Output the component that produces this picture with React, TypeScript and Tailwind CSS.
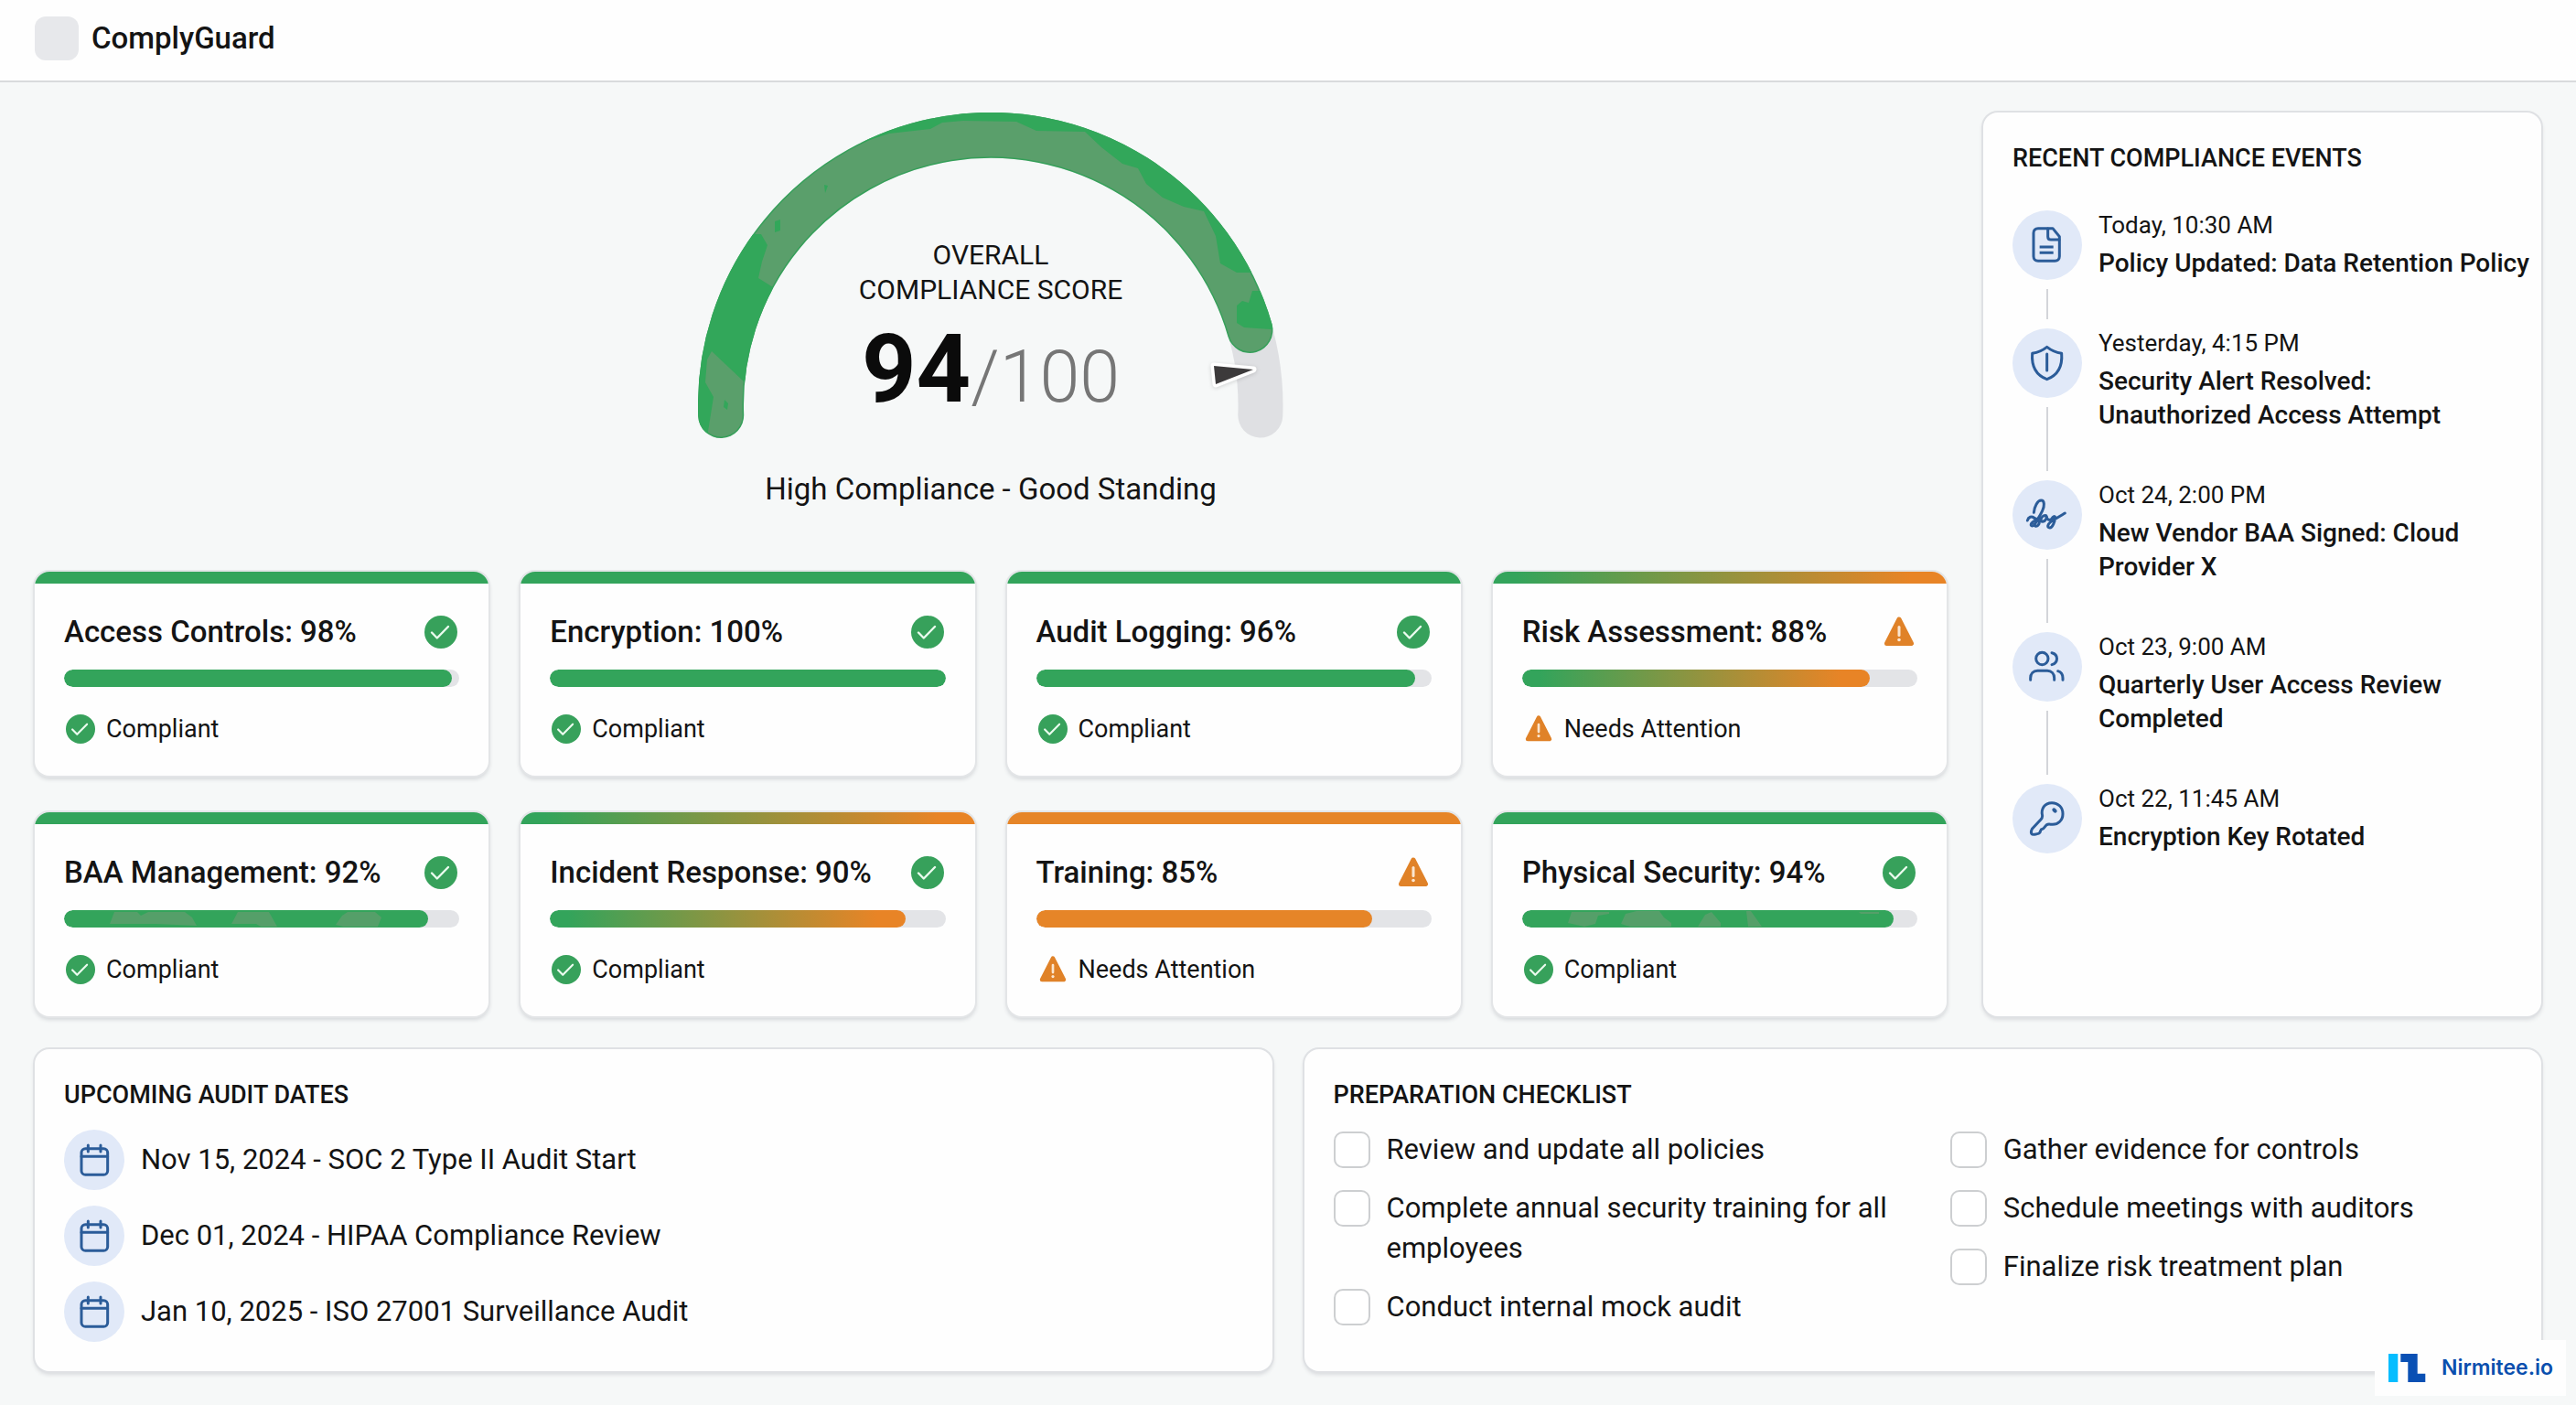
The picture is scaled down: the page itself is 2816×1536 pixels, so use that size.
import type { ReactNode } from "react"

type Status = "ok" | "warn"
type Tone = "green" | "mixed" | "orange"

type Control = {
  name: string
  score: number
  status: Status
  tone: Tone
  texture?: string
}

type ComplianceEvent = {
  time: string
  title: string
  icon: ReactNode
  oneLine?: boolean
}

const controls: Control[] = [
  { name: "Access Controls", score: 98, status: "ok", tone: "green" },
  { name: "Encryption", score: 100, status: "ok", tone: "green" },
  { name: "Audit Logging", score: 96, status: "ok", tone: "green" },
  { name: "Risk Assessment", score: 88, status: "warn", tone: "mixed" },
  {
    name: "BAA Management",
    score: 92,
    status: "ok",
    tone: "green",
    texture: "M50 15 55 2H80L84 6 92 2H132L140 8 145 17 100 15ZM183 15 190 2H224L233 18H215L210 15ZM297 16 304 6 310 2H340L347 8 343 18H305Z",
  },
  { name: "Incident Response", score: 90, status: "ok", tone: "mixed" },
  { name: "Training", score: 85, status: "warn", tone: "orange" },
  {
    name: "Physical Security",
    score: 94,
    status: "ok",
    tone: "green",
    texture: "M50 14 54 2H95V4L83 6 80 15 68 18ZM108 15 113 4 125 1H150L155 8 163 14V18H118ZM192 18 200 5 207 2 217 14V18ZM245 1H250L262 18H247ZM368 2H390V4H370Z",
  },
]

const toneClass: Record<Tone, string> = {
  green: "bg-[#33a45b]",
  mixed: "bg-linear-to-r/srgb from-[#33a45b] from-5% to-[#e88426] to-92%",
  orange: "bg-[#e68528]",
}

const events: ComplianceEvent[] = [
  { time: "Today, 10:30 AM", title: "Policy Updated: Data Retention Policy", icon: <FileIcon />, oneLine: true },
  { time: "Yesterday, 4:15 PM", title: "Security Alert Resolved: Unauthorized Access Attempt", icon: <ShieldIcon /> },
  { time: "Oct 24, 2:00 PM", title: "New Vendor BAA Signed: Cloud Provider X", icon: <SignatureIcon /> },
  { time: "Oct 23, 9:00 AM", title: "Quarterly User Access Review Completed", icon: <UsersIcon /> },
  { time: "Oct 22, 11:45 AM", title: "Encryption Key Rotated", icon: <KeyIcon /> },
]

const audits = [
  "Nov 15, 2024 - SOC 2 Type II Audit Start",
  "Dec 01, 2024 - HIPAA Compliance Review",
  "Jan 10, 2025 - ISO 27001 Surveillance Audit",
]

const checklist = [
  [
    "Review and update all policies",
    "Complete annual security training for all employees",
    "Conduct internal mock audit",
  ],
  [
    "Gather evidence for controls",
    "Schedule meetings with auditors",
    "Finalize risk treatment plan",
  ],
]

function LineIcon({ children }: { children: ReactNode }) {
  return (
    <svg
      viewBox="0 0 228 228"
      className="size-full"
      fill="none"
      stroke="#2b5c99"
      strokeWidth="9"
      strokeLinecap="round"
      strokeLinejoin="round"
      aria-hidden="true"
    >
      {children}
    </svg>
  )
}

function FileIcon() {
  return (
    <LineIcon>
      <path d="M132 59H84c-9 0-15 6-15 15v77c0 9 6 15 15 15h55c9 0 15-6 15-15V86Z" />
      <path d="M116 60v26c0 6 4 10 10 10h27" />
      <path d="M89 120h45M89 139h45" strokeLinecap="butt" />
    </LineIcon>
  )
}

function ShieldIcon() {
  return (
    <LineIcon>
      <path d="M113 61C98 73 83 79 65 82c-3 38 9 70 48 85 39-15 51-47 48-85-18-3-33-9-48-21Z" />
      <path d="M113 84v54" />
    </LineIcon>
  )
}

function SignatureIcon() {
  return (
    <LineIcon>
      <g transform="translate(-14 -6)">
        <path d="M84 112c2-20 12-40 24-40s11 20 4 34c-8 17-16 28-20 36-4 9-10 16-16 13-5-4 3-14 15-17 13-3 13 12 5 17-5 3-11 1-11-4" />
        <path d="M63 138c3-12 14-15 21-9s14 5 20 2" />
        <path d="M105 140c2-12 11-21 19-18 5 6-1 18-11 20-5 0-7-3-5-8" />
        <path d="M124 124c4 12 11 15 18 9 5-7 10-11 12-6-1 14-8 34-18 35-9 0-8-11 4-20 15-10 29-18 46-28" />
      </g>
    </LineIcon>
  )
}

function UsersIcon() {
  return (
    <LineIcon>
      <g transform="translate(-14 -505)">
        <circle cx="111" cy="592" r="20" />
        <path d="M143 573c22 5 22 33 0 39" />
        <path d="M73 662v-6c0-14 9-24 23-24h32c14 0 23 10 23 24v6" />
        <path d="M163 633c11 3 16 12 16 23v6" />
      </g>
    </LineIcon>
  )
}

function KeyIcon() {
  return (
    <LineIcon>
      <g transform="translate(-14 -1003)">
        <path d="M112 1108c-6-24 8-43 31-43 21 0 36 15 36 36 0 22-16 35-33 35-8 0-14-3-20 1-5 4-8 13-14 14-8 1-5 8-9 12-4 5-8 3-13 5-5 1-11 2-13-1-3-4-1-12 1-16l28-30c4-4 6-7 6-13Z" />
        <ellipse cx="152" cy="1090" rx="9" ry="6" transform="rotate(45 152 1090)" fill="#2b5c99" stroke="none" />
      </g>
    </LineIcon>
  )
}

function CalendarIcon() {
  return (
    <svg
      viewBox="0 0 198 198"
      className="size-full"
      fill="none"
      stroke="#2b5c99"
      strokeWidth="9"
      strokeLinecap="round"
      strokeLinejoin="round"
      aria-hidden="true"
    >
      <rect x="57" y="62" width="86" height="86" rx="13" />
      <path d="M57 88h86M79 51v21M120 51v21" />
    </svg>
  )
}

function StatusIcon({ status, className }: { status: Status; className: string }) {
  if (status === "warn") {
    return (
      <svg viewBox="0 0 36 36" className={className} aria-hidden="true">
        <path d="M18 4 31.500 30.500H4.500Z" fill="#e08228" stroke="#e08228" strokeWidth="5" strokeLinejoin="round" />
        <path d="M18 12.500v9" stroke="#fbe6cf" strokeWidth="3" strokeLinecap="round" />
        <circle cx="18" cy="26.500" r="1.800" fill="#fbe6cf" />
      </svg>
    )
  }

  return (
    <svg viewBox="0 0 36 36" className={className} aria-hidden="true">
      <circle cx="18" cy="18" r="18" fill="#37a15b" />
      <path d="M8 18.500 13.800 24.500 26 12" fill="none" stroke="#eafbee" strokeWidth="2.400" strokeLinecap="round" strokeLinejoin="round" />
    </svg>
  )
}

function Gauge() {
  const arc = "M25.200 331A295 295 0 1 1 614.800 331"
  const filled = "M25.200 331A295 295 0 0 1 603.400 238"

  return (
    <div className="grid w-[640px] justify-items-center">
      <svg viewBox="0 0 640 356" className="col-start-1 row-start-1 w-full" fill="none" aria-hidden="true">
        <defs>
          <mask id="band" maskUnits="userSpaceOnUse" x="0" y="0" width="640" height="356">
            <path d={filled} stroke="#fff" strokeWidth="50" strokeLinecap="round" />
          </mask>
        </defs>
        <path d={arc} stroke="#dfe0e3" strokeWidth="49" strokeLinecap="round" />
        <path d={filled} stroke="#36a05a" strokeWidth="50" strokeLinecap="round" />
        <path d={filled} stroke="#5a9f6b" strokeWidth="47" strokeLinecap="round" />
        <g mask="url(#band)" fill="#32a75a">
          <path d="M15 261 51 295 82 191 66 181 70 163 76 145 69 133H0v223l10-1 7-44-9-16 2-25Z" />
          <path d="m178 33 31-10 45-5 13-7 23-2 58 1 22 10 53 1 18 17 23 18 17 5 9 17 18 15 23 10 22 5 13 27 5 30 18 10h51V0H150Z" />
          <path d="m589 211 6-5 7 2 4-13h34v43l-43-3-8-5Z" />
          <path d="M29 314l4 4-1 7-4-3ZM84 119l6-2v12l-6 2ZM138 79l4 1-3 8Z" />
        </g>
        <path
          d="M564 277 607 281 566 297Z"
          fill="#3c3a3b"
          stroke="#fff"
          strokeWidth="7"
          strokeLinejoin="round"
          paintOrder="stroke"
          className="drop-shadow-sm"
        />
      </svg>

      <div className="col-start-1 row-start-1 flex flex-col items-center pt-[137px]">
        <p className="text-center text-[30px] leading-[38px]">
          OVERALL
          <br />
          COMPLIANCE SCORE
        </p>
        <p className="mt-2 flex items-baseline leading-[120px]">
          <span className="text-[104px] font-bold text-[#0b0b0b]">94</span>
          <span className="text-[79px] font-light text-[#767676]">/100</span>
        </p>
      </div>
    </div>
  )
}

function ControlCard({ control }: { control: Control }) {
  return (
    <article className="overflow-hidden rounded-2xl bg-[#fefefe] shadow-[0_0_0_2px_#e3e5e7,0_3px_4px_1px_#d5d8db]">
      <div className={`h-[13px] ${toneClass[control.tone]}`} />
      <div className="px-8 pt-[33px] pb-[34px]">
        <div className="flex h-10 items-center justify-between pr-[2px]">
          <h2 className="text-[33px] leading-10 font-medium whitespace-nowrap">
            {control.name}: {control.score}%
          </h2>
          <StatusIcon status={control.status} className="size-9" />
        </div>
        <div className="mt-[21px] h-[19px] overflow-hidden rounded-full bg-[#e3e4e7]">
          <div className={`h-full rounded-full ${toneClass[control.tone]}`} style={{ width: `${control.score}%` }}>
            {control.texture && (
              <svg className="h-full w-full" aria-hidden="true">
                <path d={control.texture} fill="#559f69" />
              </svg>
            )}
          </div>
        </div>
        <div className="mt-[29px] flex h-[34px] items-center gap-[10px]">
          <span className="flex w-9 justify-center">
            <StatusIcon status={control.status} className="size-8" />
          </span>
          <p className="text-[27px]">{control.status === "ok" ? "Compliant" : "Needs Attention"}</p>
        </div>
      </div>
    </article>
  )
}

function Panel({ title, className = "", children }: { title: string; className?: string; children: ReactNode }) {
  return (
    <section className={`rounded-2xl bg-[#fefefe] px-8 pt-8 shadow-[0_0_0_2px_#dfe1e4,0_3px_4px_1px_#dadcdf] ${className}`}>
      <h2 className="text-[27px] leading-[37px] font-medium">{title}</h2>
      {children}
    </section>
  )
}

function EventItem({ event, last }: { event: ComplianceEvent; last: boolean }) {
  return (
    <li className="flex gap-[18px]">
      <div className="flex flex-col items-center">
        <span className="size-[76px] rounded-full bg-[#e1e9f8]">{event.icon}</span>
        {!last && <span className="my-[10px] w-[2px] flex-1 bg-[#d3d5d9]" />}
      </div>
      <div className={`flex flex-1 flex-col gap-[7px] ${last ? "" : "pb-[53px]"}`}>
        <time className="text-[26px] leading-8">{event.time}</time>
        <p className={`text-[28px] leading-[37px] font-medium ${event.oneLine ? "whitespace-nowrap" : ""}`}>
          {event.title}
        </p>
      </div>
    </li>
  )
}

function CheckItem({ label }: { label: string }) {
  return (
    <li>
      <label className="flex gap-[18px]">
        <input
          type="checkbox"
          className="mt-[2px] size-10 shrink-0 appearance-none rounded-[10px] border-2 border-[#cdcfd1] bg-white checked:bg-[#33a45b]"
        />
        <span className="text-[31px] leading-[44px]">{label}</span>
      </label>
    </li>
  )
}

export default function App() {
  return (
    <div className="relative min-h-screen bg-[#f6f8f8] font-['Roboto',sans-serif] text-[#141414]">
      <header className="flex h-[90px] items-center gap-[14px] border-b-2 border-[#d9dbdd] bg-[#fefefe] px-[38px] pb-1">
        <span className="size-12 rounded-xl bg-[#e7e8eb]" />
        <h1 className="text-[33px] font-medium">ComplyGuard</h1>
      </header>

      <main className="flex flex-col gap-9 px-[38px] pt-[33px] pb-9">
        <div className="flex gap-10">
          <div className="flex-1">
            <div className="flex flex-col items-center pb-[69px]">
              <Gauge />
              <p className="mt-[35px] text-[33px] leading-[42px]">High Compliance - Good Standing</p>
            </div>
            <div className="grid grid-cols-4 gap-x-[35px] gap-y-10">
              {controls.map(control => (
                <ControlCard key={control.name} control={control} />
              ))}
            </div>
          </div>

          <Panel title="RECENT COMPLIANCE EVENTS" className="w-[610px]">
            <ul className="mt-[38px]">
              {events.map((event, i) => (
                <EventItem key={event.time} event={event} last={i === events.length - 1} />
              ))}
            </ul>
          </Panel>
        </div>

        <div className="grid grid-cols-2 gap-[35px]">
          <Panel title="UPCOMING AUDIT DATES" className="pb-8">
            <ul className="mt-[19px] flex flex-col gap-[17px]">
              {audits.map(audit => (
                <li key={audit} className="flex items-center gap-[18px]">
                  <span className="size-[66px] rounded-full bg-[#e1e9f8]">
                    <CalendarIcon />
                  </span>
                  <p className="text-[31px]">{audit}</p>
                </li>
              ))}
            </ul>
          </Panel>

          <Panel title="PREPARATION CHECKLIST" className="pb-8">
            <div className="mt-[19px] grid grid-cols-2 gap-[60px]">
              {checklist.map((column, i) => (
                <ul key={i} className="flex flex-col gap-5">
                  {column.map(label => (
                    <CheckItem key={label} label={label} />
                  ))}
                </ul>
              ))}
            </div>
          </Panel>
        </div>
      </main>

      <a
        href="#"
        className="absolute right-[11px] bottom-[10px] flex h-[61px] w-[209px] items-center gap-[17px] bg-[#fefefe] pl-[15px]"
      >
        <svg viewBox="0 0 41 31" className="h-[31px] w-[41px]" aria-hidden="true">
          <path d="M0 0h10.300v31H0Z" fill="#05bdff" />
          <path d="M13.300 0h18.400v21.700h8.600V31h-19V9h-8Z" fill="#0a50b4" />
        </svg>
        <span className="font-['Inter',sans-serif] text-[23px] font-semibold text-[#0a4fae]">Nirmitee.io</span>
      </a>
    </div>
  )
}
